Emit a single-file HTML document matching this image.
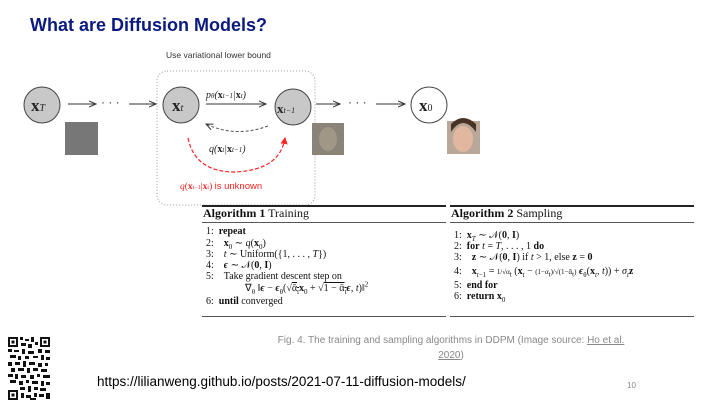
<!DOCTYPE html>
<html><head><meta charset="utf-8"><style>
body{margin:0;width:720px;height:405px;background:#fff;position:relative;overflow:hidden;font-family:"Liberation Sans",sans-serif}
.a{position:absolute;white-space:nowrap}
.s{font-family:"Liberation Serif",serif;color:#111}
.ln{position:absolute;height:1px;background:#222}
.L{position:absolute;white-space:nowrap;font-family:"Liberation Serif",serif;color:#111;font-size:10px;line-height:10px}
sub,sup{font-size:7px;line-height:0}
</style></head><body>
<div class="a" style="left:30px;top:15px;font-size:18px;font-weight:bold;color:#0b1a7e">What are Diffusion Models?</div>

<svg class="a" style="left:0;top:0" width="720" height="210">
<defs><marker id="ar" markerWidth="8" markerHeight="8" refX="7" refY="4" orient="auto"><path d="M0,1 L7,4 L0,7" fill="none" stroke="#333" stroke-width="1"/></marker>
<marker id="rr" markerWidth="6" markerHeight="6" refX="5" refY="3" orient="auto"><path d="M0,0 L6,3 L0,6z" fill="#f22"/></marker></defs>
<rect x="157" y="71" width="158" height="134" rx="10" fill="none" stroke="#999" stroke-dasharray="1,2"/>
<text x="166" y="58" font-size="8.5" fill="#333" font-family="Liberation Sans">Use variational lower bound</text>
<circle cx="42" cy="105" r="18" fill="#c8c8c8" stroke="#444"/>
<circle cx="181" cy="105" r="18" fill="#c8c8c8" stroke="#444"/>
<circle cx="293" cy="107" r="18" fill="#c8c8c8" stroke="#444"/>
<circle cx="429" cy="105" r="18" fill="#fff" stroke="#444"/>
<g font-family="Liberation Serif" font-weight="bold" fill="#222">
<text x="31" y="111" font-size="17">x<tspan font-size="10" font-style="italic" font-weight="normal">T</tspan></text>
<text x="172" y="111" font-size="17">x<tspan font-size="10" font-style="italic" font-weight="normal">t</tspan></text>
<text x="277" y="113" font-size="13">x<tspan font-size="8" font-style="italic" font-weight="normal">t−1</tspan></text>
<text x="419" y="111" font-size="17">x<tspan font-size="10" font-weight="normal">0</tspan></text>
</g>
<g stroke="#333" stroke-width="1" marker-end="url(#ar)">
<line x1="68" y1="104" x2="96" y2="104"/><line x1="129" y1="104" x2="156" y2="104"/>
<line x1="206" y1="104" x2="266" y2="104"/><line x1="316" y1="104" x2="340" y2="104"/>
<line x1="376" y1="104" x2="405" y2="104"/>
</g>
<text x="101" y="106" font-size="12" fill="#333">· · ·</text>
<text x="348" y="106" font-size="12" fill="#333">· · ·</text>
<text x="206" y="98" font-size="10" fill="#222" font-family="Liberation Serif" font-style="italic">p<tspan font-size="7">θ</tspan>(<tspan font-weight="bold" font-style="normal">x</tspan><tspan font-size="7">t−1</tspan>|<tspan font-weight="bold" font-style="normal">x</tspan><tspan font-size="7">t</tspan>)</text>
<path d="M268,126 Q236,138 206,124" fill="none" stroke="#555" stroke-dasharray="3,2" marker-end="url(#ar)"/>
<text x="209" y="152" font-size="10" fill="#222" font-family="Liberation Serif" font-style="italic">q(<tspan font-weight="bold" font-style="normal">x</tspan><tspan font-size="7">t</tspan>|<tspan font-weight="bold" font-style="normal">x</tspan><tspan font-size="7">t−1</tspan>)</text>
<path d="M188,138 Q195,172 235,172 Q280,170 285,138" fill="none" stroke="#f22" stroke-width="1.2" stroke-dasharray="4,2" marker-end="url(#rr)"/>
<text x="180" y="189" font-size="9.5" fill="#f22" font-family="Liberation Serif"><tspan font-style="italic">q</tspan>(<tspan font-weight="bold">x</tspan><tspan font-size="6">t−1</tspan>|<tspan font-weight="bold">x</tspan><tspan font-size="6">t</tspan>) <tspan font-family="Liberation Sans">is unknown</tspan></text>
<rect x="65" y="122" width="33" height="33" fill="#777"/>
<rect x="312" y="123" width="32" height="32" fill="#8a8378"/>
<ellipse cx="328" cy="139" rx="9" ry="12" fill="#a19787"/>
<rect x="447" y="121" width="33" height="33" fill="#b9a79a"/>
<path d="M451,132 Q463,114 476,132 L476,124 Q463,112 451,124z" fill="#4a3325"/>
<ellipse cx="463" cy="139" rx="10" ry="13" fill="#e2b7a0"/>
</svg>

<div class="ln" style="left:202px;top:205px;width:244px;height:1.5px"></div>
<div class="ln" style="left:450px;top:205px;width:244px;height:1.5px"></div>
<div class="ln" style="left:202px;top:222px;width:244px;background:#555"></div>
<div class="ln" style="left:450px;top:222px;width:244px;background:#555"></div>
<div class="ln" style="left:202px;top:316px;width:244px;background:#555"></div>
<div class="ln" style="left:450px;top:316px;width:244px;background:#555"></div>
<div class="a s" style="left:203px;top:206px;font-size:12px"><b>Algorithm 1</b> Training</div>
<div class="a s" style="left:451px;top:206px;font-size:12px"><b>Algorithm 2</b> Sampling</div>

<div class="L" style="left:206px;top:227px">1: &nbsp;<b>repeat</b></div>
<div class="L" style="left:206px;top:239px">2: &nbsp;&nbsp;&nbsp;<b>x</b><sub>0</sub> ∼ <i>q</i>(<b>x</b><sub>0</sub>)</div>
<div class="L" style="left:206px;top:250px">3: &nbsp;&nbsp;&nbsp;<i>t</i> ∼ Uniform({1, . . . , <i>T</i>})</div>
<div class="L" style="left:206px;top:261px">4: &nbsp;&nbsp;&nbsp;<b><i>ϵ</i></b> ∼ 𝒩(<b>0</b>, <b>I</b>)</div>
<div class="L" style="left:206px;top:272px">5: &nbsp;&nbsp;&nbsp;Take gradient descent step on</div>
<div class="L" style="left:245px;top:284px">∇<sub>θ</sub> ‖<b><i>ϵ</i></b> − <b><i>ϵ</i></b><sub>θ</sub>(√<span style="text-decoration:overline">ᾱ<sub>t</sub></span><b>x</b><sub>0</sub> + √<span style="text-decoration:overline">1 − ᾱ<sub>t</sub></span><b><i>ϵ</i></b>, <i>t</i>)‖<sup>2</sup></div>
<div class="L" style="left:206px;top:297px">6: &nbsp;<b>until</b> converged</div>

<div class="L" style="left:454px;top:231px">1: &nbsp;<b>x</b><sub><i>T</i></sub> ∼ 𝒩(<b>0</b>, <b>I</b>)</div>
<div class="L" style="left:454px;top:242px">2: &nbsp;<b>for</b> <i>t</i> = <i>T</i>, . . . , 1 <b>do</b></div>
<div class="L" style="left:454px;top:253px">3: &nbsp;&nbsp;&nbsp;<b>z</b> ∼ 𝒩(<b>0</b>, <b>I</b>) if <i>t</i> &gt; 1, else <b>z</b> = <b>0</b></div>
<div class="L" style="left:454px;top:267px">4: &nbsp;&nbsp;&nbsp;<b>x</b><sub><i>t</i>−1</sub> = <span style="font-size:7px">1/√α<sub>t</sub></span> (<b>x</b><sub><i>t</i></sub> − <span style="font-size:7px">(1−α<sub>t</sub>)/√(1−ᾱ<sub>t</sub>)</span> <b><i>ϵ</i></b><sub>θ</sub>(<b>x</b><sub><i>t</i></sub>, <i>t</i>)) + <i>σ</i><sub><i>t</i></sub><b>z</b></div>
<div class="L" style="left:454px;top:281px">5: &nbsp;<b>end for</b></div>
<div class="L" style="left:454px;top:292px">6: &nbsp;<b>return x</b><sub>0</sub></div>

<div class="a" style="left:261px;top:333px;font-size:10px;color:#888;width:380px;text-align:center;line-height:15px">Fig. 4. The training and sampling algorithms in DDPM (Image source: <u>Ho et al.</u><br><u>2020</u>)</div>
<div class="a" style="left:97px;top:374px;font-size:13.5px;color:#000">https://lilianweng.github.io/posts/2021-07-11-diffusion-models/</div>
<div class="a" style="left:627px;top:381px;font-size:8px;color:#888">10</div>

<svg class="a" style="left:8px;top:337px" width="42" height="63" viewBox="0 0 42 63">
<rect width="42" height="63" fill="#fff"/>
<g fill="#111">
<rect x="0" y="0" width="10" height="10"/><rect x="2" y="2" width="6" height="6" fill="#fff"/><rect x="3.5" y="3.5" width="3" height="3"/>
<rect x="32" y="0" width="10" height="10"/><rect x="34" y="2" width="6" height="6" fill="#fff"/><rect x="35.5" y="3.5" width="3" height="3"/>
<rect x="0" y="53" width="10" height="10"/><rect x="2" y="55" width="6" height="6" fill="#fff"/><rect x="3.5" y="56.5" width="3" height="3"/>
<path d="M12 0h3v3h-3zM17 2h4v2h-4zM23 0h3v5h-3zM13 6h5v3h-5zM20 7h4v4h-4zM27 5h3v3h-3zM0 12h4v3h-4zM6 13h5v2h-5zM14 12h3v5h-3zM20 14h6v3h-6zM30 12h4v4h-4zM37 13h5v3h-5zM2 18h6v3h-6zM10 19h3v4h-3zM17 19h4v3h-4zM25 19h5v2h-5zM33 18h3v5h-3zM38 20h4v3h-4zM0 25h4v4h-4zM7 25h5v3h-5zM15 24h3v6h-3zM21 25h6v3h-6zM30 26h4v4h-4zM37 26h3v3h-3zM3 31h4v4h-4zM10 31h6v3h-6zM19 31h3v5h-3zM25 31h5v3h-5zM33 32h6v3h-6zM0 37h5v3h-5zM7 37h3v5h-3zM13 38h5v3h-5zM22 38h4v4h-4zM29 37h3v3h-3zM35 38h7v3h-7zM2 43h6v3h-6zM11 44h4v4h-4zM18 43h3v3h-3zM24 44h6v3h-6zM33 44h3v5h-3zM38 45h4v3h-4zM12 50h5v3h-5zM20 49h3v6h-3zM26 50h4v3h-4zM32 51h6v3h-6zM13 56h3v5h-3zM18 58h5v3h-5zM26 56h3v4h-3zM31 57h5v3h-5zM38 56h4v6h-4zM22 61h6v2h-6z"/>
</g></svg>
</body></html>
